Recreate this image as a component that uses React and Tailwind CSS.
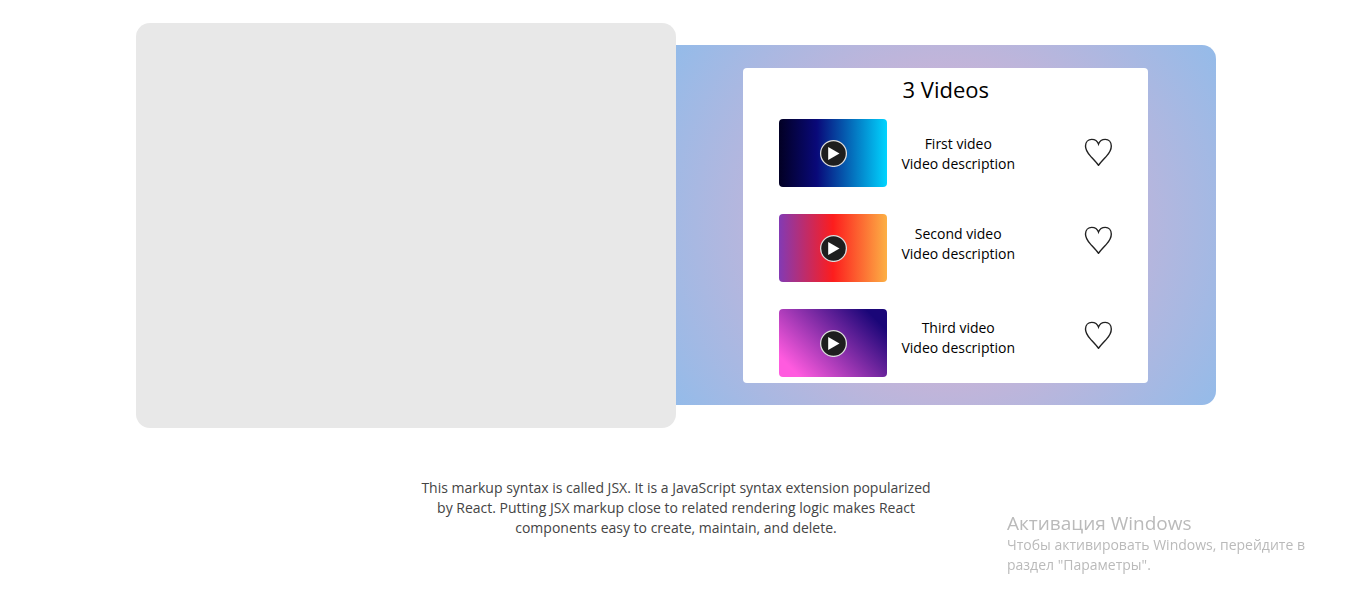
const videos = [
  {
    title: 'First video',
    description: 'Video description',
    thumb: 'bg-[linear-gradient(90deg,#020024_0%,#090979_35%,#00d4ff_100%)]',
    textPad: 'pt-0.5',
    heartPad: 'pb-0.5',
  },
  {
    title: 'Second video',
    description: 'Video description',
    thumb: 'bg-[linear-gradient(90deg,#833ab4_0%,#fd1d1d_50%,#fcb045_100%)]',
    textPad: 'pb-2',
    heartPad: 'pb-4',
  },
  {
    title: 'Third video',
    description: 'Video description',
    thumb: 'bg-[linear-gradient(45deg,#ff5bdf_12%,#1a0678_88%)]',
    textPad: 'pb-2.5',
    heartPad: 'pb-4',
  },
];

function PlayIcon() {
  return (
    <svg width="28" height="28" viewBox="0 0 28 28" aria-hidden="true">
      <circle cx="14.5" cy="14.5" r="12.9" fill="#1e1e1e" stroke="#dcdcdc" strokeWidth="1.3" />
      <path d="M9.2 8 L20.5 14.5 L9.2 21 Z" fill="#fff" />
    </svg>
  );
}

function HeartIcon() {
  return (
    <svg width="28" height="28" viewBox="0 0 28 28" fill="none" stroke="#222" strokeWidth="1.4" aria-hidden="true">
      <path d="M14.5 27.3 C12.5 24.5 9.3 21.2 6.3 17.9 C3.3 14.6 1.5 12.1 1.5 8.1 C1.5 3.9 4.3 1.4 7.7 1.4 C11 1.4 13.4 3 14.5 6.1 C15.6 3 18 1.4 21.3 1.4 C24.7 1.4 27.3 3.9 27.3 8.1 C27.3 12.1 25.7 14.6 22.7 17.9 C19.7 21.2 16.5 24.5 14.5 27.3 Z" />
    </svg>
  );
}

function Video({ video }) {
  return (
    <li className="flex gap-3.5">
      <button
        type="button"
        aria-label={`Play ${video.title}`}
        className={`flex h-[68px] w-[108px] shrink-0 items-center justify-center rounded ${video.thumb}`}
      >
        <PlayIcon />
      </button>
      <div className={`flex flex-col justify-center text-center text-sm leading-5 ${video.textPad}`}>
        <h3>{video.title}</h3>
        <p>{video.description}</p>
      </div>
      <div className={`ml-auto flex items-center ${video.heartPad}`}>
        <button type="button" aria-label={`Like ${video.title}`}>
          <HeartIcon />
        </button>
      </div>
    </li>
  );
}

export default function App() {
  return (
    <div className="bg-white pt-[23px] pl-[3px] font-['Open_Sans','Noto_Sans',sans-serif] text-black">
      <main className="mx-auto flex w-[80vw] items-start justify-center">
        <section className="h-[405px] flex-1 rounded-[14px] bg-[#e8e8e8]" />
        <section className="mt-[22px] flex flex-1 justify-center rounded-r-[14px] bg-[radial-gradient(circle,#eeaeca_0%,#94bbe9_100%)] pt-[23px] pb-[22px]">
          <div className="w-3/4 rounded bg-white px-9 pt-1.5 pb-1.5">
            <h2 className="text-center text-[22px] leading-[30px]">3 Videos</h2>
            <ul className="mt-[15px] flex flex-col gap-[27px]">
              {videos.map((video) => (
                <Video key={video.title} video={video} />
              ))}
            </ul>
          </div>
        </section>
      </main>
      <p className="mx-auto mt-[50px] max-w-[520px] text-center text-sm leading-5 text-[#444]">
        This markup syntax is called JSX. It is a JavaScript syntax extension popularized by React. Putting JSX markup
        close to related rendering logic makes React components easy to create, maintain, and delete.
      </p>
      <aside className="fixed right-[22px] bottom-[29px] w-80 text-[#bababa]">
        <h2 className="text-[19px] leading-6">Активация Windows</h2>
        <p className="text-sm leading-5">Чтобы активировать Windows, перейдите в раздел "Параметры".</p>
      </aside>
    </div>
  );
}
